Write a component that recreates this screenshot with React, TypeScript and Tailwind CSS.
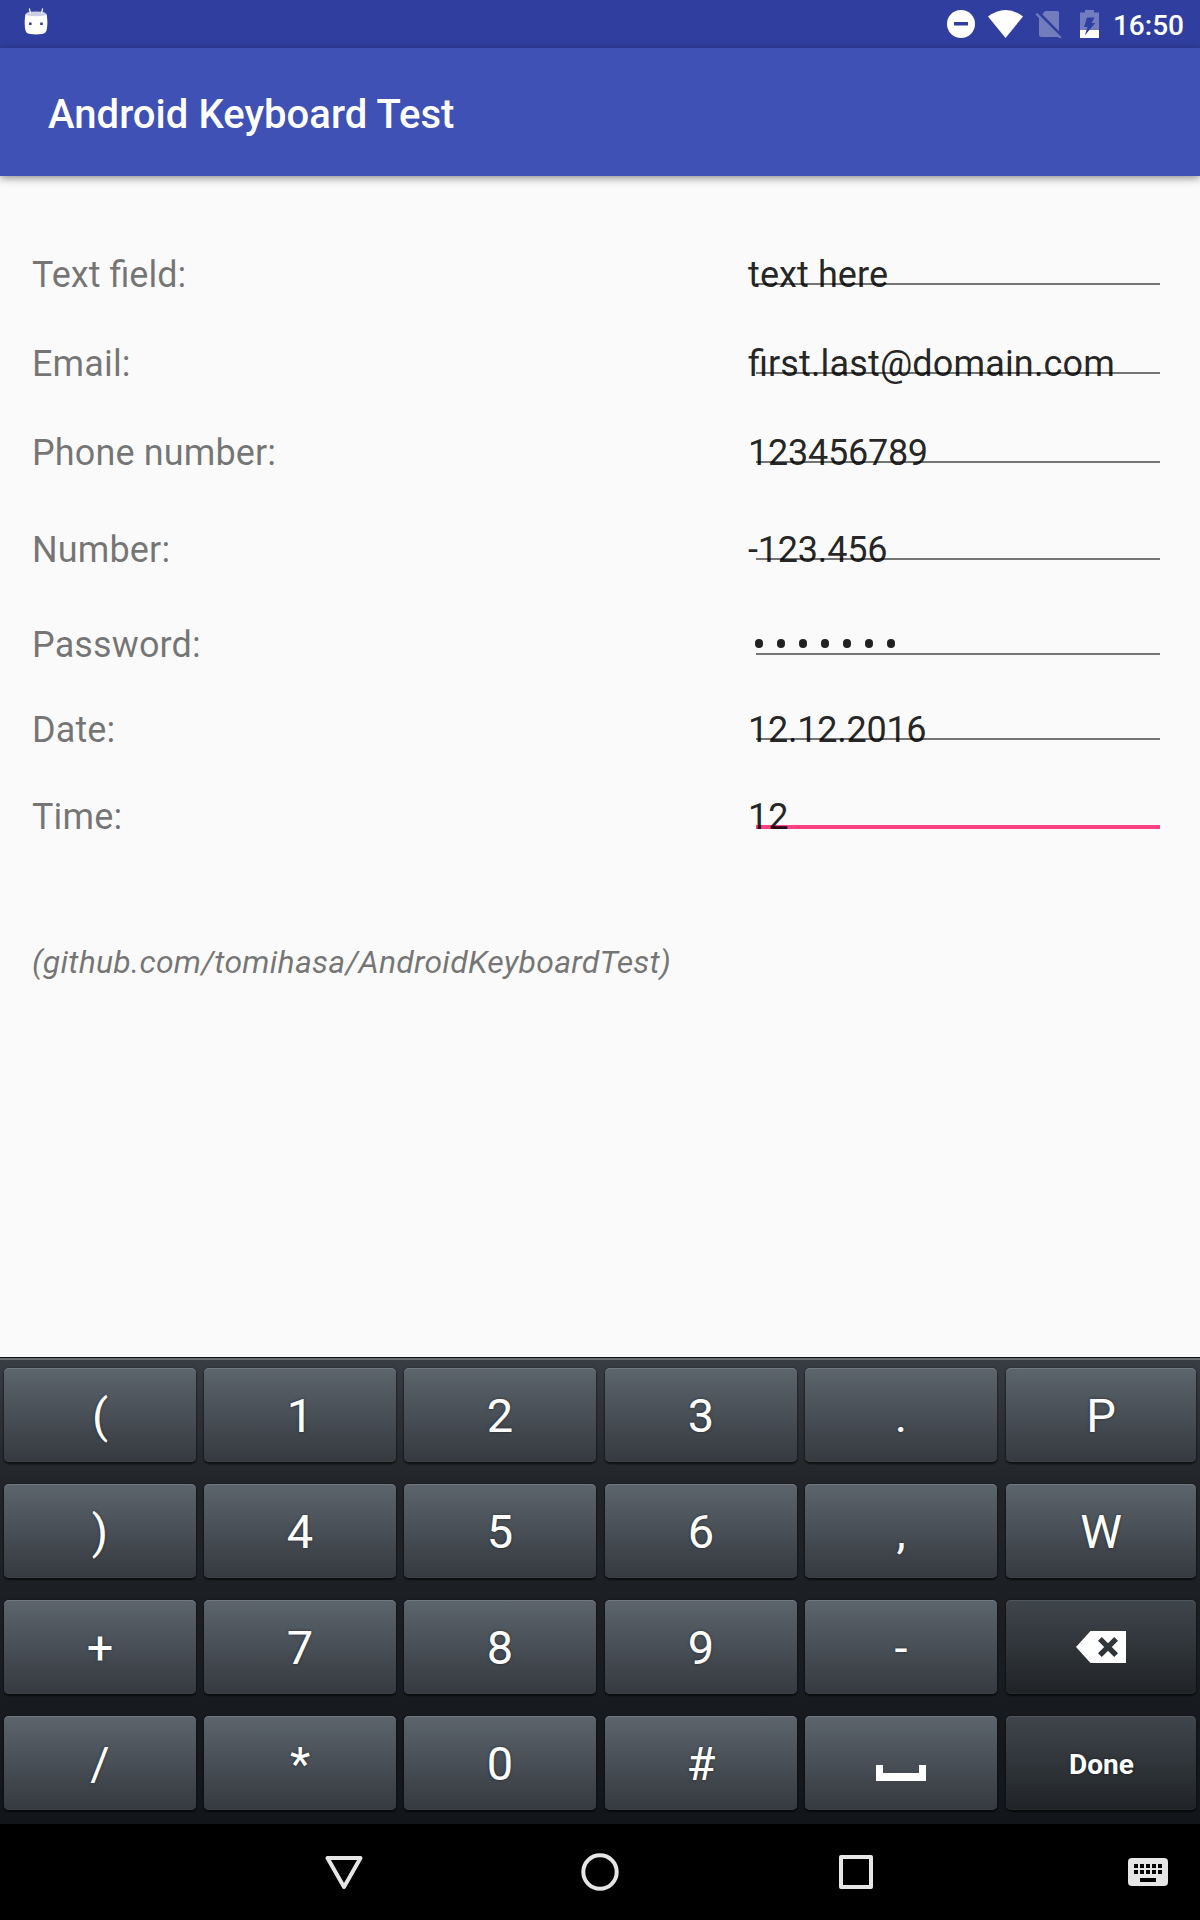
import { ReactNode } from 'react';

type Field = { label: string; value: ReactNode; height: string; tracking?: string; focused?: boolean; secret?: boolean };

const FIELDS: Field[] = [
  { label: 'Text field:', value: 'text here', height: 'h-[89px]', tracking: 'tracking-[0.1px]' },
  {
    label: 'Email:',
    value: (
      <>
        <span className="tracking-normal">fi</span>rst.last@domain.com
      </>
    ),
    height: 'h-[89px]',
    tracking: 'tracking-[0.15px]',
  },
  { label: 'Phone number:', value: '123456789', height: 'h-[97px]', tracking: 'tracking-[-0.25px]' },
  { label: 'Number:', value: '-123.456', height: 'h-[95px]', tracking: 'tracking-[-0.2px]' },
  { label: 'Password:', value: '', height: 'h-[85px]', secret: true },
  { label: 'Date:', value: '12.12.2016', height: 'h-[87px]', tracking: 'tracking-[-0.25px]' },
  { label: 'Time:', value: '12', height: 'h-[147px]', focused: true },
];

function StatusBar() {
  return (
    <div className="flex h-12 items-center bg-[#303f9f] pr-4 pl-6 text-white">
      <svg className="mb-1 h-[28px] w-6" viewBox="0 0 24 28" fill="currentColor">
        <path d="M5.300 .5 6.600 5.500M18.700 .5 17.400 5.500" stroke="currentColor" strokeWidth="1.200" />
        <path d="M1.800 6Q2.500 4.200 6 3.800Q12 3 18 3.800Q21.500 4.200 22.200 6Q20 9 12 9Q4 9 1.800 6Z" opacity=".75" />
        <path
          fillRule="evenodd"
          d="M1.500 5.800Q3.500 8.300 12 8.300Q20.500 8.300 22.500 5.800Q24.300 15 22.500 22.500Q21.700 25.500 18 26Q12 26.800 6 26Q2.200 25.500 1.500 22.500Q-0.200 15 1.500 5.800ZM5 14.500v2.600h2.600V14.500zM16.200 14.500v2.600h2.600V14.500z"
        />
      </svg>
      <div className="ml-auto flex items-center">
        <svg className="mr-[13px] h-7 w-7" viewBox="0 0 28 28">
          <circle cx="14" cy="14" r="14" fill="#fff" />
          <path d="M7 12h14v3.500H7z" fill="#303f9f" />
        </svg>
        <svg className="mr-3 h-7 w-[35px]" viewBox="0 0 35 28">
          <path d="M0 6.500Q17.500-6.500 35 6.500L17.500 28Z" fill="#fff" />
        </svg>
        <svg className="mr-[17px] h-7 w-7" viewBox="0 0 28 28">
          <g opacity=".32" fill="#fff">
            <path d="M10 1h12.500Q24 1 24 3v18.200L7.300 4.200zM4 7.500 23 26.500Q22.500 27 21.500 27H6.500Q4 27 4 24.500z" />
            <path d="M2.200 3 26.500 27.300 25 29 .5 4.600z" />
          </g>
        </svg>
        <svg className="mr-[14px] h-7 w-[19px]" viewBox="0 0 19 28">
          <path d="M0 2.500h5V0h9v2.500h5V20H0z" fill="#fff" opacity=".32" />
          <path d="M0 20h19v8H0z" fill="#fff" />
          <path d="M7 7.500h7.500L11.500 13h3.700L4.800 25.500 7.500 17H4z" fill="#303f9f" />
        </svg>
        <span className="pt-[3px] text-[28px] leading-none font-medium">16:50</span>
      </div>
    </div>
  );
}

function FieldRow({ label, value, height, tracking = '', focused, secret }: Field) {
  return (
    <div className={`flex ${height} text-[36px] leading-10`}>
      <div className={`w-[716px] text-black/54 ${label === 'Text field:' ? '' : 'tracking-[0.13px]'}`}>{label}</div>
      <div className="relative w-[412px] text-black/87">
        <div className={`absolute top-7 right-0 left-2 ${focused ? 'h-1 bg-[#ff4081]' : 'h-0.5 bg-[#757575]'}`} />
        {secret ? (
          <div className="flex gap-[14px] pt-[14px] pl-[7px]">
            {Array.from({ length: 7 }, (_, i) => (
              <span key={i} className="h-[9px] w-2 rounded-full bg-[#212121]" />
            ))}
          </div>
        ) : (
          <div className={`relative ${tracking}`}>{value}</div>
        )}
      </div>
    </div>
  );
}

function DeleteIcon() {
  return (
    <svg className="mr-px h-8 w-[50px]" viewBox="0 0 50 32">
      <path
        fillRule="evenodd"
        fill="#fff"
        d="M14.500 0H50v32H14.500L0 16ZM25.800 6 22 9.800 28.200 16 22 22.200 25.800 26 32 19.800 38.200 26 42 22.200 35.800 16 42 9.800 38.200 6 32 12.200Z"
      />
    </svg>
  );
}

function SpaceIcon() {
  return (
    <svg className="mt-5 mr-px h-4 w-[50px]" viewBox="0 0 50 16">
      <path fill="#fff" d="M0 0h7v8h36V0h7v16H0z" />
    </svg>
  );
}

const KEYS: { content: ReactNode; dark?: boolean }[] = [
  { content: '(' }, { content: '1' }, { content: '2' }, { content: '3' }, { content: '.' }, { content: 'P' },
  { content: ')' }, { content: '4' }, { content: '5' }, { content: '6' }, { content: ',' }, { content: 'W' },
  { content: '+' }, { content: '7' }, { content: '8' }, { content: '9' }, { content: '-' }, { content: <DeleteIcon />, dark: true },
  { content: '/' }, { content: '*' }, { content: '0' }, { content: '#' }, { content: <SpaceIcon /> },
  { content: <span className="pt-[3px] pl-px text-[28px] font-bold">Done</span>, dark: true },
];

function Keyboard() {
  return (
    <div className="h-[467px] border-t border-[#0c0e11] bg-linear-to-b from-[#383d44] via-[#212428] via-27% to-[#12161b]">
      <div className="h-0.5 bg-[#686d70]" />
      <div className="grid grid-cols-[192px_192px_193px_192px_193px_190px] gap-x-2 gap-y-[22px] px-1 pt-2">
        {KEYS.map((key, i) => (
          <div
            key={i}
            className={`flex h-[94px] w-full max-w-[192px] items-center justify-center rounded-[5px] text-[47px] leading-none text-white [text-shadow:0_0_3px_rgba(0,0,0,.5)] ${
              key.dark
                ? 'bg-linear-to-b from-[#3f454c] via-[#30353a] to-[#202326] shadow-[0_2px_2px_rgba(0,0,0,.6),0_0_2px_rgba(0,0,0,.5),inset_0_1px_0_#4e5859,inset_0_-1px_0_#272b2e]'
                : 'bg-linear-to-b from-[#5c646d] via-[#484f56] to-[#363940] shadow-[0_2px_2px_rgba(0,0,0,.6),0_0_2px_rgba(0,0,0,.5),inset_0_1px_0_#707980,inset_0_-1px_0_#3d4145]'
            }`}
          >
            {key.content}
          </div>
        ))}
      </div>
    </div>
  );
}

function NavigationBar() {
  return (
    <div className="flex h-24 items-center bg-black">
      <svg className="ml-[324px] size-10" viewBox="0 0 40 40" fill="none" stroke="#e6e6e6" strokeWidth="4" strokeLinejoin="round">
        <path d="M3.500 6h33L20 35z" />
      </svg>
      <svg className="ml-[216px] size-10" viewBox="0 0 40 40" fill="none" stroke="#e6e6e6" strokeWidth="4">
        <circle cx="20" cy="20" r="16.700" />
      </svg>
      <svg className="ml-[216px] size-10" viewBox="0 0 40 40" fill="none" stroke="#e6e6e6" strokeWidth="4" strokeLinejoin="round">
        <path d="M5 5h30v30H5z" />
      </svg>
      <svg className="ml-[252px] h-7 w-10" viewBox="0 0 40 28">
        <rect width="40" height="28" rx="4" fill="#e6e6e6" />
        {[6, 12, 18, 24, 30].map((x) => (
          <path key={x} d={`M${x} 6h4v4h-4zM${x} 12h4v4h-4z`} />
        ))}
        <path d="M12 20h16v4H12z" />
      </svg>
    </div>
  );
}

export default function App() {
  return (
    <div className="flex h-[1920px] w-[1200px] flex-col overflow-hidden bg-[#fafafa] font-[Roboto,sans-serif]">
      <StatusBar />
      <header className="relative flex h-32 items-center bg-[#3f51b5] pt-1.5 pl-12 shadow-[0_2px_8px_rgba(0,0,0,.45)]">
        <h1 className="text-[40px] leading-none font-medium tracking-[0.05px] text-white">Android Keyboard Test</h1>
      </header>
      <main className="flex-1 pt-[79px] pl-8">
        {FIELDS.map((field) => (
          <FieldRow key={field.label} {...field} />
        ))}
        <p className="text-[32px] leading-9 tracking-[0.23px] text-black/54 italic">(github.com/tomihasa/AndroidKeyboardTest)</p>
      </main>
      <Keyboard />
      <NavigationBar />
    </div>
  );
}
